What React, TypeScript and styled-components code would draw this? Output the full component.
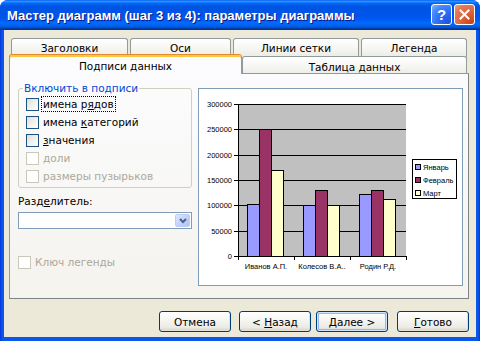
import React from 'react';
import styled, { createGlobalStyle } from 'styled-components';

const GlobalStyle = createGlobalStyle`
  html, body {
    margin: 0;
    padding: 0;
    background: #ffffff;
  }
  body {
    font-family: "DejaVu Sans", Tahoma, sans-serif;
    font-size: 10.5px;
    color: #000;
  }
`;

const row1Tabs = [
  { label: 'Заголовки', w: 117 },
  { label: 'Оси', w: 101 },
  { label: 'Линии сетки', w: 126 },
  { label: 'Легенда', w: 106 },
];

const series = [
  { name: 'Январь', color: '#9999FF', values: [102000, 100000, 122000] },
  { name: 'Февраль', color: '#993366', values: [250000, 130000, 130000] },
  { name: 'Март', color: '#FFFFCC', values: [170000, 101000, 112000] },
];

const categories = ['Иванов А.П.', 'Колесов В.А..', 'Родин Р.Д.'];

// plot geometry inside the preview box
const PLOT_L = 39;
const PLOT_T = 15;
const PLOT_W = 168;
const PLOT_H = 152;
const CAT_W = PLOT_W / 3;
const BAR_W = 12;

const yOf = (v: number) => Math.round(PLOT_T + PLOT_H - (v / 300000) * PLOT_H);

const ChartPreview: React.FC = () => {
  const ticks = [0, 1, 2, 3, 4, 5, 6].map(k => k * 50000);
  return (
    <svg width="263" height="196" viewBox="0 0 263 196" shapeRendering="crispEdges">
      <rect x={PLOT_L} y={PLOT_T} width={PLOT_W} height={PLOT_H} fill="#C0C0C0" />
      {ticks.map(t => (
        <g key={t}>
          <line x1={PLOT_L - 4} x2={PLOT_L + PLOT_W} y1={yOf(t) + 0.5} y2={yOf(t) + 0.5} stroke="#000" />
          <text
            x={33}
            y={yOf(t) + 3}
            textAnchor="end"
            fontFamily="Liberation Sans, Arial, sans-serif"
            fontSize="7.5"
            fill="#000"
          >
            {t}
          </text>
        </g>
      ))}
      {categories.map((c, ci) => {
        const gx = Math.round(PLOT_L + ci * CAT_W + 9);
        return (
          <g key={c}>
            {series.map((s, si) => {
              const top = yOf(s.values[ci]);
              return (
                <rect
                  key={s.name}
                  x={gx + si * BAR_W + 0.5}
                  y={top + 0.5}
                  width={BAR_W}
                  height={PLOT_T + PLOT_H - top}
                  fill={s.color}
                  stroke="#000"
                />
              );
            })}
            <text
              x={PLOT_L + ci * CAT_W + CAT_W / 2}
              y={180}
              textAnchor="middle"
              fontFamily="Liberation Sans, Arial, sans-serif"
              fontSize="7.5"
              fill="#000"
            >
              {c}
            </text>
          </g>
        );
      })}
      {[0, 1, 2, 3].map(i => {
        const x = Math.round(PLOT_L + i * CAT_W) + 0.5;
        return <line key={i} x1={x} x2={x} y1={PLOT_T + PLOT_H} y2={PLOT_T + PLOT_H + 4} stroke="#000" />;
      })}
      <line x1={PLOT_L + 0.5} x2={PLOT_L + 0.5} y1={PLOT_T} y2={PLOT_T + PLOT_H + 1} stroke="#000" />
      <rect x={213.5} y={70.5} width={44} height={39} fill="#fff" stroke="#000" />
      {series.map((s, i) => (
        <g key={s.name}>
          <rect x={216.5} y={75.5 + i * 13} width={5} height={5} fill={s.color} stroke="#000" />
          <text
            x={224}
            y={81 + i * 13}
            fontFamily="Liberation Sans, Arial, sans-serif"
            fontSize="7.5"
            fill="#000"
          >
            {s.name}
          </text>
        </g>
      ))}
    </svg>
  );
};

const App: React.FC = () => {
  return (
    <>
      <GlobalStyle />
      <Window>
        <TitleBar>
          <Title>Мастер диаграмм (шаг 3 из 4): параметры диаграммы</Title>
          <CaptionButtons>
            <CaptionButton>?</CaptionButton>
            <CaptionButton $close>
              <svg width="11" height="11" viewBox="0 0 11 11">
                <path d="M1.5 1.5 L9.5 9.5 M9.5 1.5 L1.5 9.5" stroke="#fff" strokeWidth="2" strokeLinecap="square" />
              </svg>
            </CaptionButton>
          </CaptionButtons>
        </TitleBar>
        <Client>
          <TabStrip>
            <TabRow $indent>
              {row1Tabs.map(t => (
                <Tab key={t.label} $w={t.w}>
                  {t.label}
                </Tab>
              ))}
            </TabRow>
            <TabRow>
              <Tab $w={233} $active>
                Подписи данных
              </Tab>
              <Tab $w={225} $second>
                Таблица данных
              </Tab>
            </TabRow>
          </TabStrip>
          <Panel>
            <LeftColumn>
              <GroupBox>
                <GroupTitle>Включить в подписи</GroupTitle>
                <CheckRow>
                  <CheckBox />
                  <CheckLabel $focus>
                    имена р<Accel>я</Accel>дов
                  </CheckLabel>
                </CheckRow>
                <CheckRow>
                  <CheckBox />
                  <CheckLabel>
                    имена <Accel>к</Accel>атегорий
                  </CheckLabel>
                </CheckRow>
                <CheckRow>
                  <CheckBox />
                  <CheckLabel>
                    <Accel>з</Accel>начения
                  </CheckLabel>
                </CheckRow>
                <CheckRow>
                  <CheckBox $disabled />
                  <CheckLabel $disabled>доли</CheckLabel>
                </CheckRow>
                <CheckRow>
                  <CheckBox $disabled />
                  <CheckLabel $disabled>размеры пузырьков</CheckLabel>
                </CheckRow>
              </GroupBox>
              <FieldLabel>
                Разд<Accel>е</Accel>литель:
              </FieldLabel>
              <Combo>
                <ComboArrow>
                  <svg width="8" height="6" viewBox="0 0 8 6">
                    <path d="M1 1 L4 4 L7 1" stroke="#4D6185" strokeWidth="2" fill="none" />
                  </svg>
                </ComboArrow>
              </Combo>
              <LegendKeyRow>
                <CheckBox $disabled />
                <CheckLabel $disabled>Ключ легенды</CheckLabel>
              </LegendKeyRow>
            </LeftColumn>
            <PreviewBox>
              <ChartPreview />
            </PreviewBox>
          </Panel>
          <ButtonRow>
            <Button $ml={0}>
              <span>Отмена</span>
            </Button>
            <Button $ml={8}>
              <span>
                &lt; <Accel>Н</Accel>азад
              </span>
            </Button>
            <Button $ml={5} $default>
              <span>
                <Accel>Д</Accel>алее &gt;
              </span>
            </Button>
            <Button $ml={9}>
              <span>
                <Accel>Г</Accel>отово
              </span>
            </Button>
          </ButtonRow>
        </Client>
      </Window>
    </>
  );
};

export default App;

const Window = styled.div`
  width: 480px;
  height: 341px;
  display: flex;
  flex-direction: column;
  background: linear-gradient(to right, #0831d9 0, #0a57ec 2px, #0a57ec 478px, #0831d9 480px);
  border-radius: 8px 8px 0 0;
  overflow: hidden;
`;

const TitleBar = styled.div`
  height: 30px;
  flex: 0 0 30px;
  display: flex;
  align-items: center;
  justify-content: space-between;
  padding: 0 5px 0 7px;
  box-sizing: border-box;
  background: linear-gradient(
    to bottom,
    #0058ee 0%,
    #3593ff 4%,
    #288eff 6%,
    #127dff 8%,
    #036ffc 10%,
    #0262ee 14%,
    #0057e5 20%,
    #0054e3 24%,
    #0055eb 56%,
    #005bf5 66%,
    #026afe 76%,
    #0062ef 86%,
    #0052d6 92%,
    #0040ab 94%,
    #003092 100%
  );
`;

const Title = styled.div`
  font-family: "Liberation Sans", Arial, sans-serif;
  font-weight: bold;
  font-size: 13px;
  color: #fff;
  text-shadow: 1px 1px 0 #0a1883;
  white-space: nowrap;
`;

const CaptionButtons = styled.div`
  display: flex;
  gap: 2px;
  margin-top: -1px;
`;

const CaptionButton = styled.div<{ $close?: boolean }>`
  width: 21px;
  height: 21px;
  box-sizing: border-box;
  border: 1px solid #fff;
  border-radius: 3px;
  display: flex;
  align-items: center;
  justify-content: center;
  color: #fff;
  font-family: "Liberation Sans", Arial, sans-serif;
  font-weight: bold;
  font-size: 15px;
  background: ${p =>
    p.$close
      ? 'radial-gradient(circle at 85% 90%, #cc4614 0%, #dc6440 45%, #e37a58 75%, #f0a080 100%)'
      : 'radial-gradient(circle at 85% 90%, #1d55e0 0%, #2e6ef8 45%, #4a8bfc 75%, #8cb7ff 100%)'};
`;

const Client = styled.div`
  flex: 1;
  margin: 0 4px 4px;
  background: #ece9d8;
  padding: 8px 7px 0 5px;
  display: flex;
  flex-direction: column;
`;

const TabStrip = styled.div`
  display: flex;
  flex-direction: column;
`;

const TabRow = styled.div<{ $indent?: boolean }>`
  display: flex;
  gap: ${p => (p.$indent ? 2 : 0)}px;
  padding-left: ${p => (p.$indent ? 2 : 0)}px;
  height: ${p => (p.$indent ? 18 : 17)}px;
`;

const Tab = styled.div<{ $w: number; $active?: boolean; $second?: boolean }>`
  flex: 0 0 ${p => p.$w}px;
  box-sizing: border-box;
  height: ${p => (p.$active ? 20 : 19)}px;
  border: 1px solid #919b9c;
  border-bottom: none;
  border-radius: 3px 3px 0 0;
  background: linear-gradient(#ffffff, #f4f4f0 60%, #ecebe6);
  display: flex;
  align-items: center;
  justify-content: center;
  padding-top: ${p => (p.$second ? 2 : 0)}px;
  white-space: nowrap;
  ${p =>
    p.$active &&
    `
    position: relative;
    z-index: 1;
    margin-top: -2px;
    border-top: 1px solid #e68b2c;
    box-shadow: inset 0 2px 0 #ffc83c;
    padding-top: 2px;
    background: #fcfcfe;
  `}
`;

const Panel = styled.div`
  height: 226px;
  box-sizing: border-box;
  border: 1px solid #919b9c;
  border-right-color: #7e8385;
  border-bottom-color: #7e8385;
  background: linear-gradient(#fcfcfe, #f4f3ee);
  display: grid;
  grid-template-columns: 174px 265px;
  column-gap: 6px;
  align-items: start;
  padding: 8px 0 0 8px;
`;

const LeftColumn = styled.div`
  display: flex;
  flex-direction: column;
`;

const GroupBox = styled.fieldset`
  margin: 0;
  padding: 0 6px 2px 7px;
  border: 1px solid #d0d0bf;
  border-radius: 3px;
  min-width: 0;
`;

const GroupTitle = styled.legend`
  color: #0046d5;
  padding: 0 1px;
  margin-left: -3px;
  line-height: 13px;
`;

const CheckRow = styled.div`
  display: flex;
  align-items: center;
  height: 18px;
  gap: 3px;
`;

const CheckBox = styled.div<{ $disabled?: boolean }>`
  width: 13px;
  height: 13px;
  box-sizing: border-box;
  flex: 0 0 13px;
  border: 1px solid ${p => (p.$disabled ? '#cac8bb' : '#1c5180')};
  background: ${p => (p.$disabled ? '#ffffff' : 'linear-gradient(135deg, #dcdcd7 0%, #f2f2ef 55%, #ffffff 100%)')};
`;

const CheckLabel = styled.span<{ $disabled?: boolean; $focus?: boolean }>`
  color: ${p => (p.$disabled ? '#aca899' : '#000')};
  padding: 0 1px;
  line-height: 14px;
  white-space: nowrap;
  outline: ${p => (p.$focus ? '1px dotted #000' : 'none')};
`;

const Accel = styled.span`
  text-decoration: underline;
`;

const FieldLabel = styled.div`
  margin-top: 7px;
  line-height: 13px;
`;

const Combo = styled.div`
  margin-top: 4px;
  height: 17px;
  box-sizing: border-box;
  border: 1px solid #7f9db9;
  background: #fff;
  display: flex;
  justify-content: flex-end;
  align-items: center;
  padding-right: 1px;
`;

const ComboArrow = styled.div`
  width: 15px;
  height: 13px;
  border-radius: 2px;
  border: 1px solid #bcccf4;
  box-sizing: border-box;
  background: linear-gradient(135deg, #dde8ff 0%, #c2d4fb 50%, #aec4f5 100%);
  display: flex;
  align-items: center;
  justify-content: center;
`;

const LegendKeyRow = styled(CheckRow)`
  margin-top: 24px;
`;

const PreviewBox = styled.div`
  margin-top: 6px;
  width: 265px;
  height: 198px;
  box-sizing: border-box;
  border: 1px solid #7f9db9;
  background: #fff;
  display: flex;
`;

const ButtonRow = styled.div`
  display: flex;
  justify-content: flex-end;
  margin-top: 12px;
`;

const Button = styled.div<{ $ml: number; $default?: boolean }>`
  width: 72px;
  height: 21px;
  box-sizing: border-box;
  margin-left: ${p => p.$ml}px;
  border: 1px solid #003c74;
  border-radius: 3px;
  background: linear-gradient(#ffffff 0%, #f6f6f3 40%, #ecebe6 80%, #d6d0c5 100%);
  display: flex;
  align-items: center;
  justify-content: center;
  white-space: nowrap;
  box-shadow: ${p =>
    p.$default ? 'inset 0 0 0 1px #cee7ff, inset 0 0 0 2px #98b8ea' : 'inset -1px -1px 0 #e3e0d6'};
`;
